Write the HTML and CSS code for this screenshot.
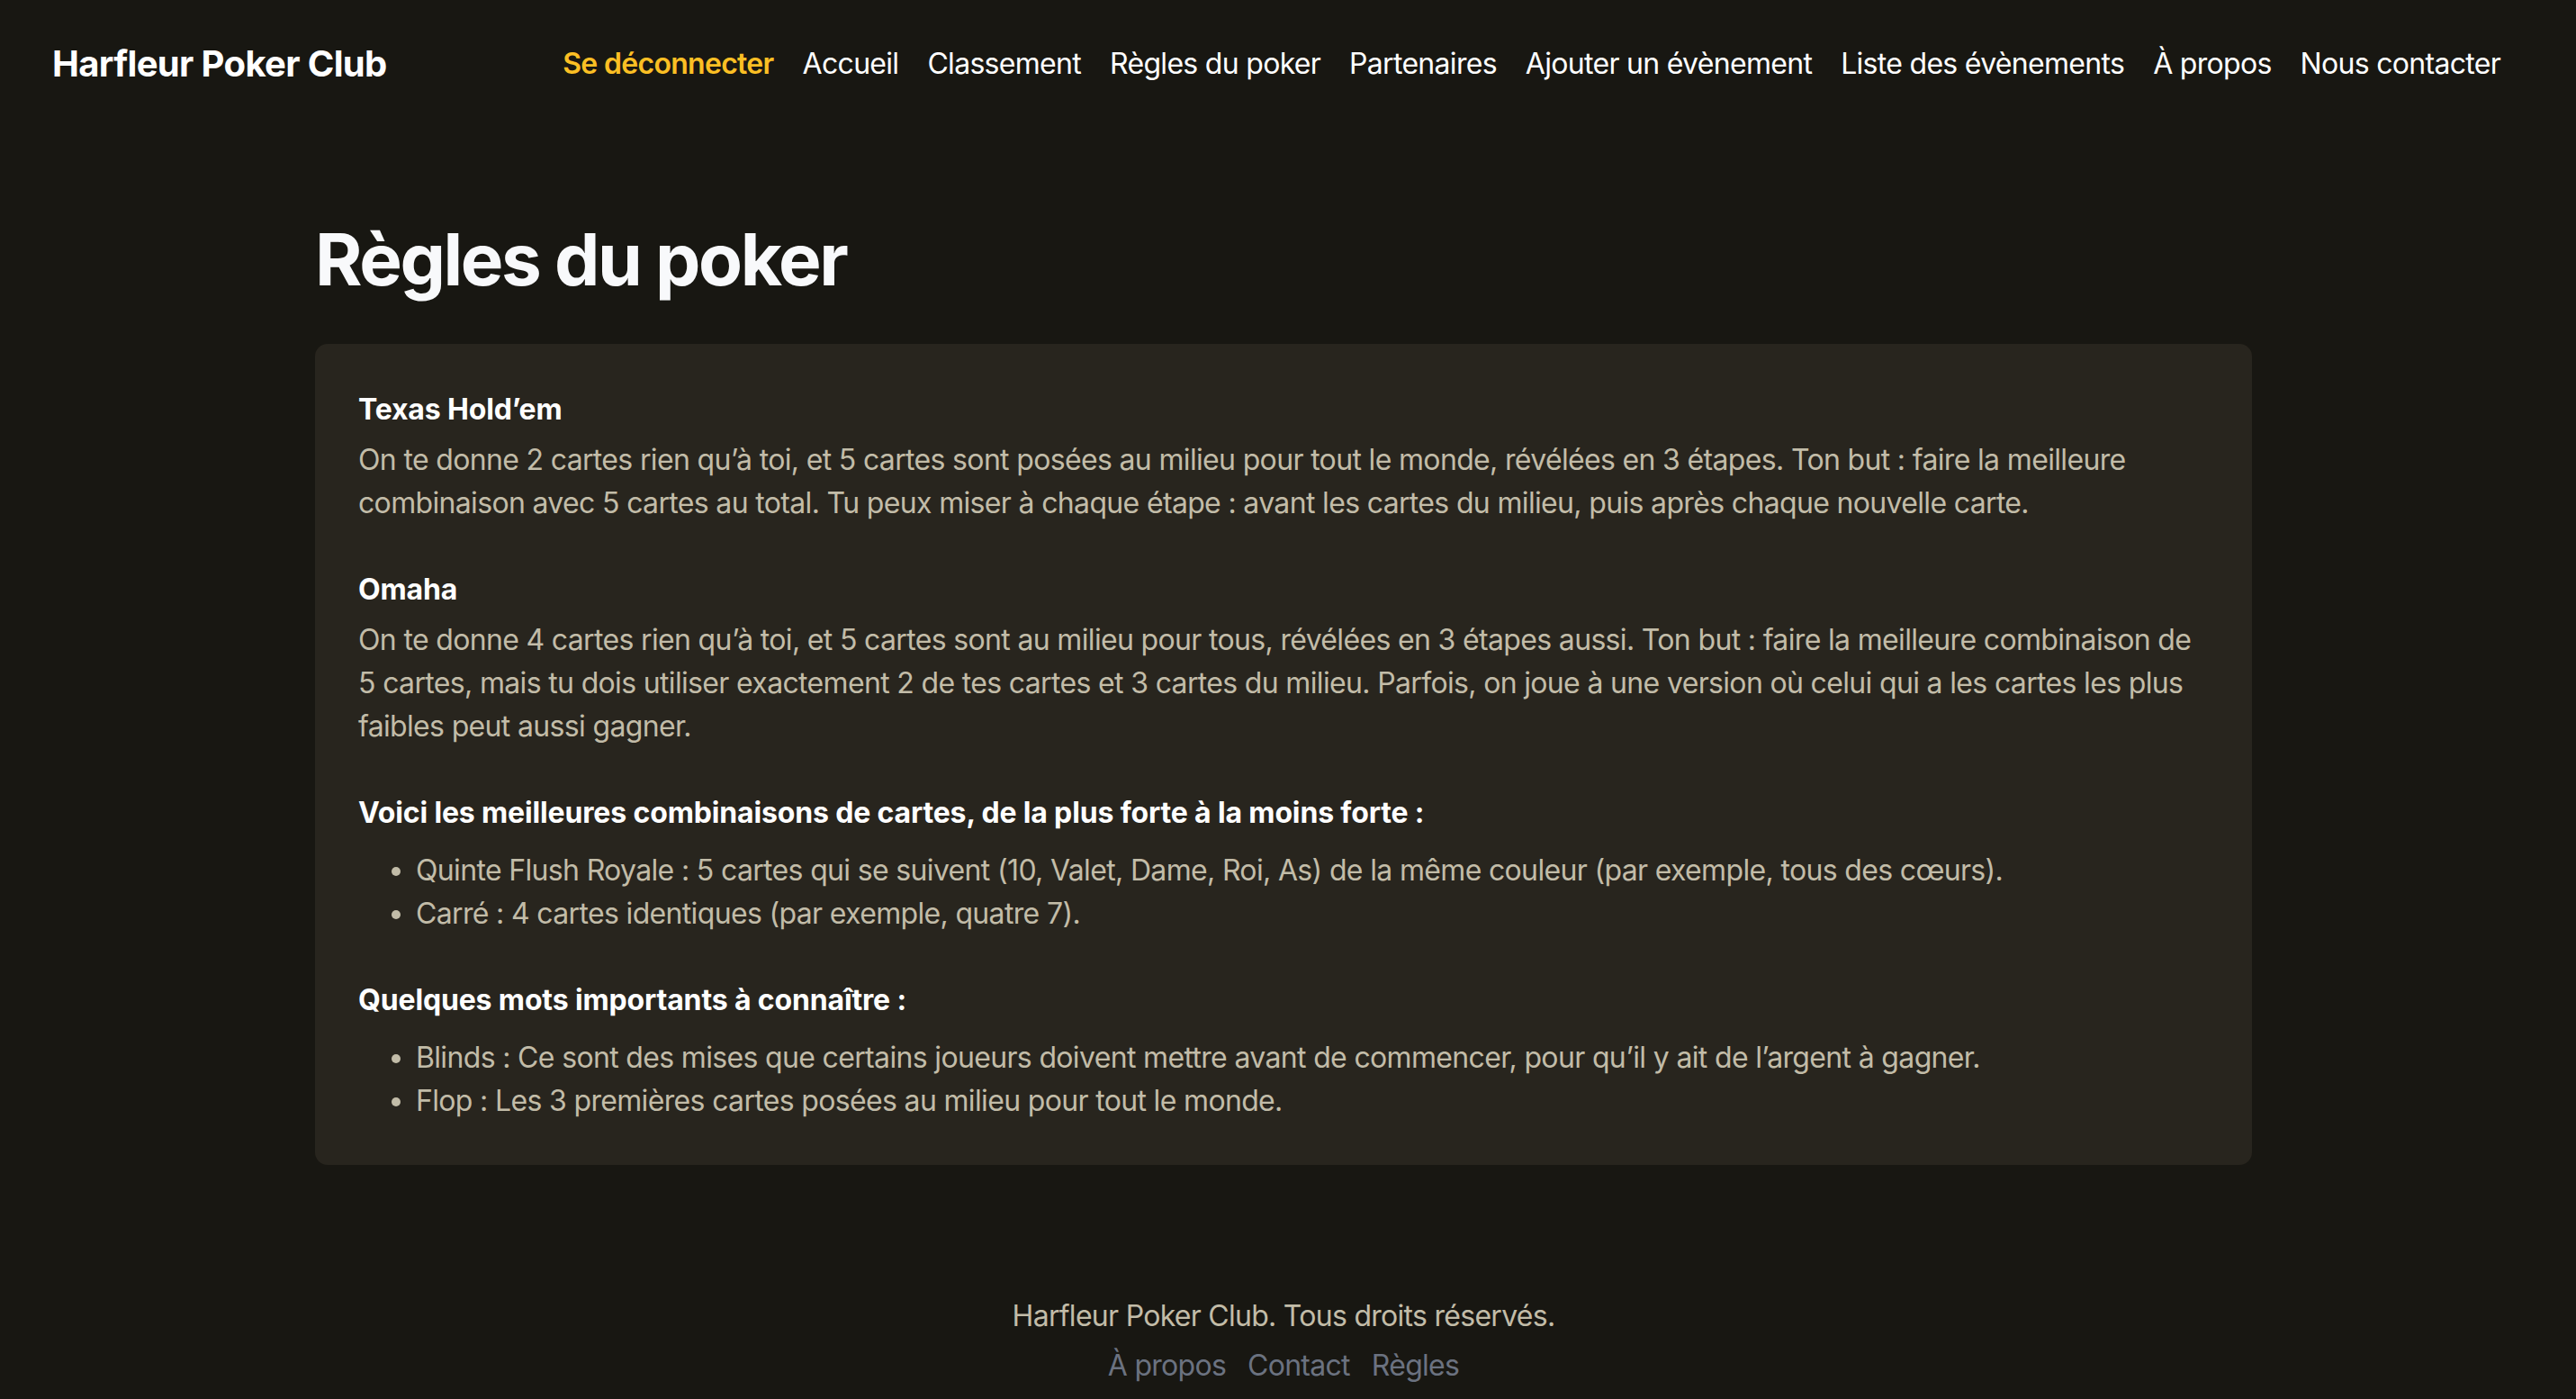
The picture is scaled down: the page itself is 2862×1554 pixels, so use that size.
FILE: index.html
```html
<!DOCTYPE html>
<html lang="fr">
<head>
<meta charset="utf-8">
<title>Règles du poker - Harfleur Poker Club</title>
<link rel="stylesheet" href="styles.css">
</head>
<body>
<header class="site-header">
  <a class="logo" href="#">Harfleur Poker Club</a>
  <nav class="nav">
    <a class="nav-link nav-logout" href="#">Se déconnecter</a>
    <a class="nav-link" href="#">Accueil</a>
    <a class="nav-link" href="#">Classement</a>
    <a class="nav-link" href="#">Règles du poker</a>
    <a class="nav-link" href="#">Partenaires</a>
    <a class="nav-link" href="#">Ajouter un évènement</a>
    <a class="nav-link" href="#">Liste des évènements</a>
    <a class="nav-link" href="#">À propos</a>
    <a class="nav-link" href="#">Nous contacter</a>
  </nav>
</header>

<main class="main">
  <h1 class="page-title">Règles du poker</h1>
  <section class="card">
    <div class="block">
      <h2 class="block-title">Texas Hold’em</h2>
      <p class="block-text">On te donne 2 cartes rien qu’à toi, et 5 cartes sont posées au milieu pour tout le monde, révélées en 3 étapes. Ton but : faire la meilleure combinaison avec 5 cartes au total. Tu peux miser à chaque étape : avant les cartes du milieu, puis après chaque nouvelle carte.</p>
    </div>
    <div class="block">
      <h2 class="block-title">Omaha</h2>
      <p class="block-text">On te donne 4 cartes rien qu’à toi, et 5 cartes sont au milieu pour tous, révélées en 3 étapes aussi. Ton but : faire la meilleure combinaison de 5 cartes, mais tu dois utiliser exactement 2 de tes cartes et 3 cartes du milieu. Parfois, on joue à une version où celui qui a les cartes les plus faibles peut aussi gagner.</p>
    </div>
    <div class="block">
      <h2 class="block-title list-title">Voici les meilleures combinaisons de cartes, de la plus forte à la moins forte :</h2>
      <ul class="block-list">
        <li>Quinte Flush Royale : 5 cartes qui se suivent (10, Valet, Dame, Roi, As) de la même couleur (par exemple, tous des cœurs).</li>
        <li>Carré : 4 cartes identiques (par exemple, quatre 7).</li>
      </ul>
    </div>
    <div class="block">
      <h2 class="block-title list-title">Quelques mots importants à connaître :</h2>
      <ul class="block-list">
        <li>Blinds : Ce sont des mises que certains joueurs doivent mettre avant de commencer, pour qu’il y ait de l’argent à gagner.</li>
        <li>Flop : Les 3 premières cartes posées au milieu pour tout le monde.</li>
      </ul>
    </div>
  </section>
</main>

<footer class="site-footer">
  <p class="footer-copy">Harfleur Poker Club. Tous droits réservés.</p>
  <div class="footer-links">
    <a class="footer-link" href="#">À propos</a>
    <a class="footer-link" href="#">Contact</a>
    <a class="footer-link" href="#">Règles</a>
  </div>
</footer>
</body>
</html>
```

FILE: styles.css
```css
* {
  box-sizing: border-box;
}

html, body {
  margin: 0;
  padding: 0;
}

body {
  background: #181712;
  color: #ffffff;
  font-family: Inter, "Noto Sans", "Liberation Sans", sans-serif;
  min-height: 1554px;
}

a {
  text-decoration: none;
  color: inherit;
}

.site-header {
  display: flex;
  align-items: center;
  justify-content: space-between;
  padding: 43px 84px 43px 56px;
}

.logo {
  font-size: 40px;
  line-height: 56px;
  font-weight: 700;
  color: #ffffff;
  letter-spacing: -0.65px;
  margin-left: 2px;
}

.nav {
  display: flex;
  align-items: center;
  gap: 32px;
}

.nav-link {
  font-size: 32px;
  line-height: 48px;
  color: #ffffff;
  letter-spacing: -0.7px;
}

.nav-logout {
  color: #fbbf24;
  font-weight: 600;
}

.main {
  padding: 98px 360px 0 350px;
}

.page-title {
  margin: 0 0 46px 0;
  font-size: 80px;
  line-height: 96px;
  font-weight: 700;
  color: #f8f9fb;
  letter-spacing: -2.4px;
}

.card {
  background: #28251e;
  border-radius: 14px;
  padding: 49px 48px 47px 48px;
  display: flex;
  flex-direction: column;
  gap: 48px;
}

.block-title {
  margin: 0 0 8px 0;
  font-size: 32px;
  line-height: 48px;
  font-weight: 700;
  color: #ffffff;
  letter-spacing: -0.15px;
}

.list-title {
  margin-bottom: 16px;
}

.block-text {
  margin: 0;
  font-size: 32px;
  line-height: 48px;
  color: #c2bca8;
  letter-spacing: -0.66px;
}

.block-list {
  margin: 0;
  padding-left: 64px;
  list-style: disc;
  font-size: 32px;
  line-height: 48px;
  color: #c2bca8;
  letter-spacing: -0.66px;
}

.site-footer {
  padding: 144px 10px 40px 0;
  display: flex;
  flex-direction: column;
  align-items: center;
}

.footer-copy {
  margin: 0;
  font-size: 32px;
  line-height: 48px;
  color: #c2bca8;
  letter-spacing: -0.72px;
}

.footer-links {
  margin-top: 7px;
  display: flex;
  gap: 24px;
}

.footer-link {
  font-size: 32px;
  line-height: 48px;
  color: #6b7280;
  letter-spacing: -0.72px;
}
```
